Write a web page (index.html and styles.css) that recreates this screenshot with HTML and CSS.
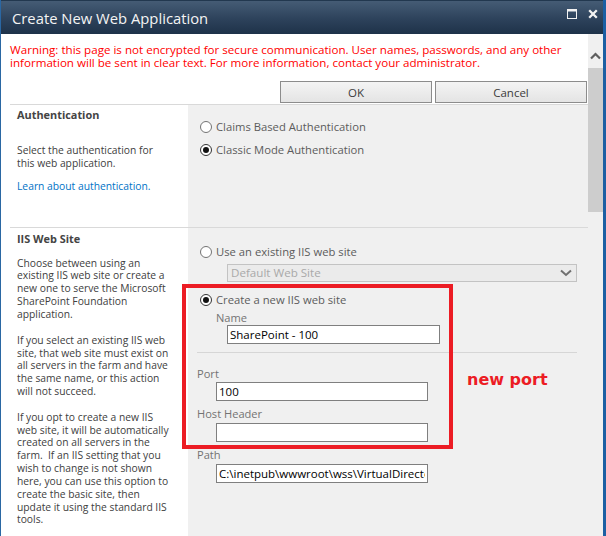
FILE: index.html
```html
<!DOCTYPE html>
<html>
<head>
<meta charset="utf-8">
<title>Create New Web Application</title>
<link rel="stylesheet" href="styles.css">
</head>
<body>
<div class="window">
  <div class="titlebar">
    <span class="title">Create New Web Application</span>
    <div class="winbtns">
      <svg class="wicon" width="10" height="10" viewBox="0 0 10 10"><rect x="0.5" y="0.5" width="9" height="9" fill="none" stroke="#f2f2f2" stroke-width="1"/><rect x="0" y="0" width="10" height="2.5" fill="#f2f2f2"/></svg>
      <svg class="wicon" width="10" height="10" viewBox="0 0 10 10"><path d="M1.2 1.2L8.8 8.8M8.8 1.2L1.2 8.8" stroke="#f2f2f2" stroke-width="2.3" fill="none"/></svg>
    </div>
  </div>
  <div class="main">
    <div class="content">
      <p class="warning"><span class="wline">Warning: this page is not encrypted for secure communication. User names, passwords, and any other</span><span class="wline">information will be sent in clear text. For more information, contact your administrator.</span></p>
      <div class="buttons">
        <button class="btn">OK</button>
        <button class="btn">Cancel</button>
      </div>

      <div class="section auth">
        <div class="left">
          <div class="head">Authentication</div>
          <div class="desc auth-desc">Select the authentication for<br>this web application.</div>
          <a class="link">Learn about authentication.</a>
        </div>
        <div class="right auth-right">
          <div class="radio-row"><span class="radio"></span><span class="rlabel">Claims Based Authentication</span></div>
          <div class="radio-row second"><span class="radio checked"></span><span class="rlabel">Classic Mode Authentication</span></div>
        </div>
      </div>

      <div class="section iis">
        <div class="left">
          <div class="head">IIS Web Site</div>
          <div class="desc iis-desc">
            <p>Choose between using an<br>existing IIS web site or create a<br>new one to serve the Microsoft<br>SharePoint Foundation<br>application.</p>
            <p>If you select an existing IIS web<br>site, that web site must exist on<br>all servers in the farm and have<br>the same name, or this action<br>will not succeed.</p>
            <p>If you opt to create a new IIS<br>web site, it will be automatically<br>created on all servers in the<br>farm.&nbsp; If an IIS setting that you<br>wish to change is not shown<br>here, you can use this option to<br>create the basic site, then<br>update it using the standard IIS<br>tools.</p>
          </div>
        </div>
        <div class="right iis-right">
          <div class="radio-row"><span class="radio"></span><span class="rlabel">Use an existing IIS web site</span></div>
          <div class="select">
            <span class="select-text">Default Web Site</span>
            <svg width="12" height="8" viewBox="0 0 12 8"><path d="M1 1.5L6 6L11 1.5" stroke="#707070" stroke-width="2" fill="none"/></svg>
          </div>
          <div class="radio-row create"><span class="radio checked"></span><span class="rlabel">Create a new IIS web site</span></div>
          <div class="flabel name-label">Name</div>
          <input class="field name-field" type="text" value="SharePoint - 100">
          <div class="rule"></div>
          <div class="flabel port-label">Port</div>
          <input class="field sub-field" type="text" value="100">
          <div class="flabel gap-label">Host Header</div>
          <input class="field sub-field" type="text" value="">
          <div class="flabel gap-label">Path</div>
          <input class="field sub-field" type="text" value="C:\inetpub\wwwroot\wss\VirtualDirectories\100">
        </div>
      </div>
    </div>
    <div class="scrollbar">
      <div class="scroll-up">
        <svg width="11" height="8" viewBox="0 0 11 8"><path d="M1 6.5L5.5 2L10 6.5" stroke="#5f5f5f" stroke-width="2.2" fill="none"/></svg>
      </div>
      <div class="thumb"></div>
    </div>
  </div>
  <div class="redbox"></div>
  <div class="note">new port</div>
</div>
</body>
</html>
```

FILE: styles.css
```css
* { box-sizing: border-box; }

html, body {
  margin: 0;
  padding: 0;
}

body {
  width: 606px;
  height: 536px;
  overflow: hidden;
  background: #ffffff;
  font-family: "Open Sans", "Noto Sans", sans-serif;
  color: #444444;
}

.window {
  position: relative;
  width: 606px;
  height: 536px;
  display: flex;
  flex-direction: column;
  border-left: 1px solid #2a67a3;
  border-right: 3px solid #1c5fa3;
  background: #ffffff;
  overflow: hidden;
}

.titlebar {
  height: 34px;
  flex: none;
  display: flex;
  justify-content: space-between;
  align-items: center;
  padding-left: 11px;
  padding-right: 5px;
  border-top: 1px solid #22384f;
  background: linear-gradient(#455c75, #2d425b 55%, #1e3249);
}

.title {
  color: #f4f4f4;
  font-size: 14.8px;
  line-height: 20px;
  margin-top: 1px;
}

.winbtns {
  display: flex;
  gap: 11px;
  align-self: flex-start;
  margin-top: 8px;
}

.wicon { display: block; }

.main {
  flex: 1;
  min-height: 0;
  display: flex;
}

.content {
  flex: 1;
  min-width: 0;
  padding-left: 9px;
  overflow: hidden;
}

.warning {
  margin: 0;
  padding-top: 9px;
  color: #ff0000;
  font-size: 11.6px;
  white-space: nowrap;
}

.wline {
  display: block;
  height: 13px;
  line-height: 13px;
}

.buttons {
  display: flex;
  justify-content: flex-end;
  gap: 3px;
  margin-top: 12px;
  margin-bottom: 1px;
  padding-right: 1px;
}

.btn {
  width: 152px;
  height: 22px;
  margin: 0;
  padding: 0;
  border: 1px solid #8c8c8c;
  background: linear-gradient(#f4f4f4, #e4e4e4);
  color: #3c3c3c;
  font-family: "Open Sans", "Noto Sans", sans-serif;
  font-size: 11.5px;
}

.section {
  display: grid;
  grid-template-columns: 178px 1fr;
  border-top: 1px solid #d9d9d9;
}

.auth { height: 123px; }

.left {
  padding-left: 7px;
  padding-right: 4px;
  background: #ffffff;
}

.auth .left { padding-top: 4px; }
.iis .left { padding-top: 4.5px; }

.head {
  font-weight: 700;
  font-size: 10.9px;
  line-height: 12.85px;
  color: #444444;
  white-space: nowrap;
}

.desc {
  font-size: 10.3px;
  line-height: 12.85px;
  color: #404040;
  white-space: nowrap;
}

.auth-desc { margin-top: 22px; }

.link {
  display: block;
  margin-top: 10px;
  font-size: 10.3px;
  line-height: 12.85px;
  color: #0072c6;
  white-space: nowrap;
}

.iis-desc { margin-top: 11.25px; }

.iis-desc p {
  margin: 0 0 12.85px 0;
}

.right {
  background: #f0f0f0;
  padding-left: 9px;
}

.auth-right { padding-top: 13px; }
.iis-right { padding-top: 15px; }

.radio-row {
  height: 18px;
  display: flex;
  align-items: center;
  margin-left: 3px;
  gap: 4px;
}

.radio-row.second { margin-top: 5px; }
.radio-row.create { margin-top: 9px; }

.radio {
  width: 12px;
  height: 12px;
  flex: none;
  border-radius: 50%;
  border: 1px solid #737373;
  background: #ffffff;
  display: flex;
  align-items: center;
  justify-content: center;
}

.radio.checked { border-color: #333333; }

.radio.checked::after {
  content: "";
  width: 6px;
  height: 6px;
  border-radius: 50%;
  background: #111111;
}

.rlabel {
  font-size: 11.25px;
  line-height: 14px;
  color: #5c5c5c;
  white-space: nowrap;
}

.select {
  margin-top: 3px;
  margin-left: 30px;
  width: 350px;
  height: 18px;
  border: 1px solid #c3c3c3;
  background: #ebebeb;
  display: flex;
  align-items: center;
  justify-content: space-between;
  padding-left: 3px;
  padding-right: 4px;
}

.select-text {
  font-size: 11.6px;
  line-height: 14px;
  color: #a9a9a9;
  white-space: nowrap;
}

.flabel {
  font-size: 11.1px;
  line-height: 13px;
  color: #737373;
  white-space: nowrap;
}

.name-label {
  margin-top: 2px;
  margin-left: 19px;
}

.field {
  display: block;
  height: 19px;
  margin: 0;
  padding: 0 2px;
  border: 1px solid #7f7f7f;
  background: #ffffff;
  color: #000000;
  font-family: "Open Sans", "Noto Sans", sans-serif;
  font-size: 11.5px;
  line-height: 17px;
  outline: none;
}

.name-field {
  margin-top: 1px;
  margin-left: 30px;
  width: 213px;
}

.rule {
  margin-top: 8px;
  width: 380px;
  height: 1px;
  background: #d6d6d6;
}

.port-label { margin-top: 14px; }
.gap-label { margin-top: 6px; }

.sub-field {
  margin-top: 2px;
  margin-left: 19px;
  width: 212px;
}

.gap-label + .sub-field { margin-top: 3px; }

.scrollbar {
  width: 15px;
  flex: none;
  background: #f0f0f0;
  display: flex;
  flex-direction: column;
}

.scroll-up {
  height: 34px;
  display: flex;
  justify-content: center;
  padding-top: 18px;
}

.scroll-up svg { display: block; }

.thumb {
  height: 144px;
  background: #cdcdcd;
}

.redbox {
  position: absolute;
  left: 181px;
  top: 284px;
  width: 271px;
  height: 165px;
  border: 4px solid #ec1c24;
}

.note {
  position: absolute;
  left: 466px;
  top: 370px;
  font-family: "DejaVu Sans", sans-serif;
  font-weight: 700;
  font-size: 16px;
  line-height: 20px;
  color: #ec1c24;
  white-space: nowrap;
}
```
